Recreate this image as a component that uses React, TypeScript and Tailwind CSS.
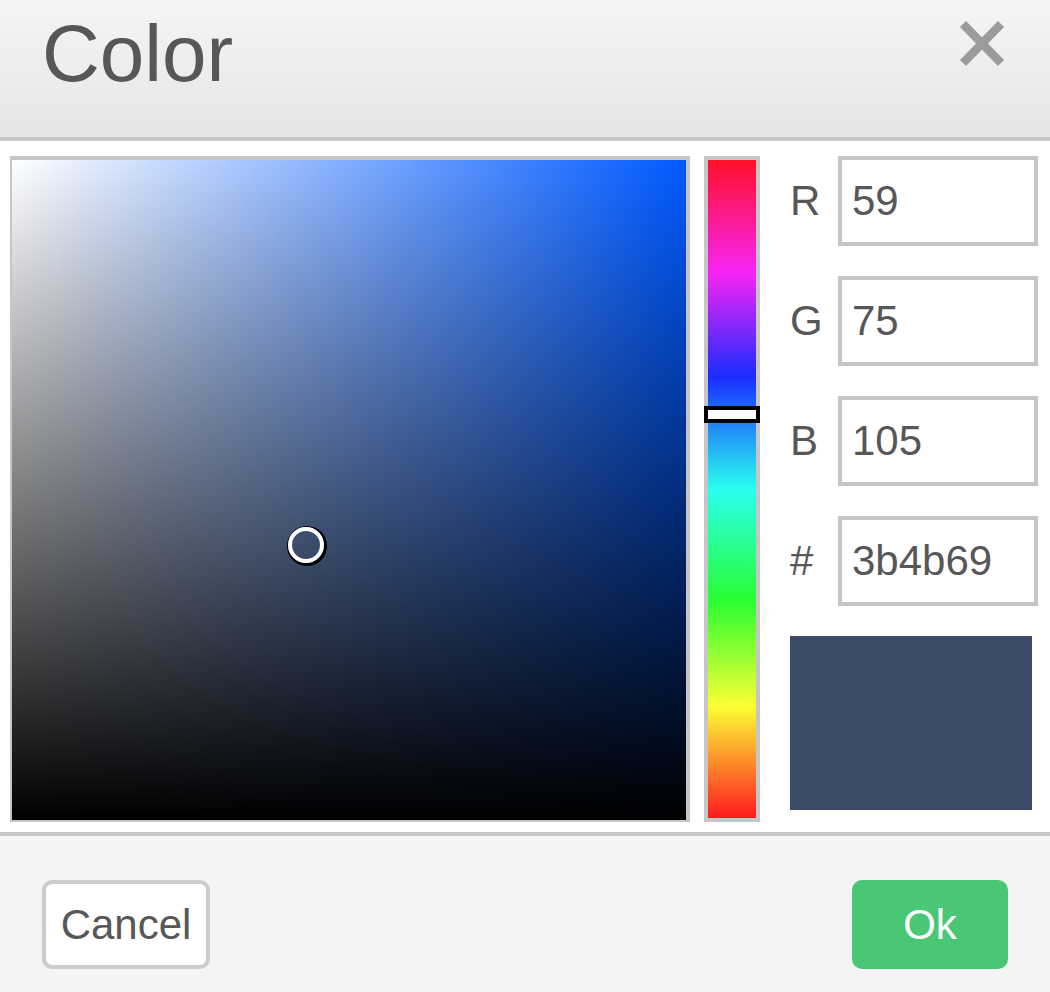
import React from "react";

const rows = [
  { label: "R", value: "59" },
  { label: "G", value: "75" },
  { label: "B", value: "105" },
  { label: "#", value: "3b4b69" },
];

export default function App() {
  return (
    <div className="w-[1050px] h-[992px] flex flex-col bg-white font-['Liberation_Sans',Arial,sans-serif] text-[#575757]">
      {/* Header */}
      <div className="h-[141px] shrink-0 border-b-4 border-[#c6c6c6] bg-[linear-gradient(to_bottom,#f5f5f5,#e5e5e5)] flex justify-between pl-[42px] pr-[45px]">
        <div className="pt-[14px] text-[80px] leading-none">Color</div>
        <div className="pt-[20px]">
          <svg width="46" height="47" viewBox="0 0 46 47">
            <path d="M4 4 L42 43 M42 4 L4 43" stroke="#9b9b9b" strokeWidth="8.5" fill="none" />
          </svg>
        </div>
      </div>

      {/* Body */}
      <div className="h-[691px] shrink-0 flex pt-[15px] pl-[10px] pb-[10px]">
        <div className="relative w-[680px] h-[666px] border-t-4 border-r-4 border-b-2 border-l-2 border-[#c6c6c6] bg-[linear-gradient(to_bottom,transparent,#000),linear-gradient(to_right,#fff,#0059ff)]">
          <div className="absolute left-[276px] top-[367px] w-[36px] h-[36px] rounded-full border-[4px] border-white shadow-[1px_1px_0_2px_#000]" />
        </div>
        <div className="relative ml-[14px] w-[56px] h-[666px] border-4 border-[#c6c6c6] bg-[linear-gradient(to_bottom,#ff1028,#f824f4_17%,#1a2cff_33%,#2afff0_50%,#28ff30_67%,#fbff34_83%,#ff1a1f)]">
          <div className="absolute -left-[4px] top-[246px] w-[56px] h-[17px] border-4 border-black bg-white" />
        </div>
        <div className="ml-[30px] flex flex-col gap-[30px]">
          {rows.map((r) => (
            <div key={r.label} className="flex items-center h-[90px]">
              <div className="w-[48px] text-[42px] leading-none">{r.label}</div>
              <input
                readOnly
                defaultValue={r.value}
                className="w-[200px] h-[90px] border-4 border-[#c6c6c6] bg-white pl-[10px] text-[42px] text-[#575757] outline-none font-['Liberation_Sans',Arial,sans-serif]"
              />
            </div>
          ))}
          <div className="w-[242px] h-[174px] bg-[#3b4b69]" />
        </div>
      </div>

      {/* Footer */}
      <div className="h-[160px] shrink-0 border-t-4 border-[#c6c6c6] bg-[#f4f4f4] flex justify-between items-start pt-[44px] px-[42px]">
        <button className="w-[168px] h-[89px] rounded-[10px] border-4 border-[#cccccc] bg-white text-[42px] text-[#575757] flex items-center justify-center">
          Cancel
        </button>
        <button className="w-[156px] h-[89px] rounded-[10px] bg-[#4ac775] text-[42px] text-white flex items-center justify-center">
          Ok
        </button>
      </div>
    </div>
  );
}
